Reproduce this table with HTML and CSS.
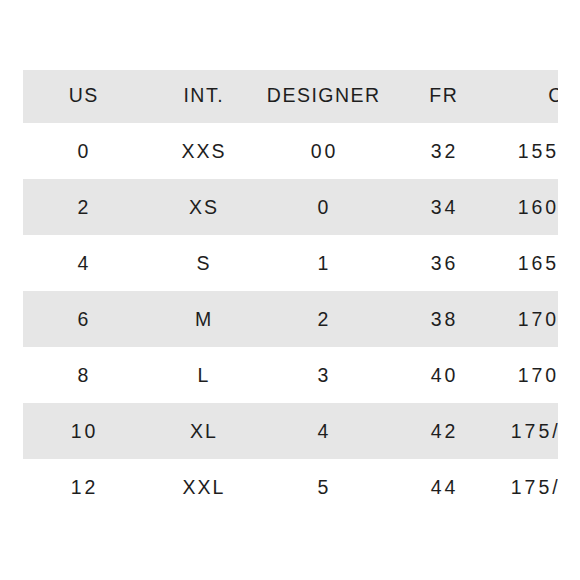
FILE: index.html
```html
<!DOCTYPE html>
<html lang="en">
<head>
<meta charset="utf-8">
<title>Size chart</title>
<link rel="stylesheet" href="styles.css">
</head>
<body>
<div class="page">
  <div class="chart">
    <table class="sizes">
      <colgroup>
        <col class="col"><col class="col"><col class="col"><col class="col"><col class="col">
      </colgroup>
      <thead>
        <tr><th>US</th><th>INT.</th><th>DESIGNER</th><th>FR</th><th>CN</th></tr>
      </thead>
      <tbody>
        <tr><td class="n">0</td><td>XXS</td><td class="n">00</td><td class="n">32</td><td class="n">155/80A</td></tr>
        <tr><td class="n">2</td><td>XS</td><td class="n">0</td><td class="n">34</td><td class="n">160/84A</td></tr>
        <tr><td class="n">4</td><td>S</td><td class="n">1</td><td class="n">36</td><td class="n">165/88A</td></tr>
        <tr><td class="n">6</td><td>M</td><td class="n">2</td><td class="n">38</td><td class="n">170/92A</td></tr>
        <tr><td class="n">8</td><td>L</td><td class="n">3</td><td class="n">40</td><td class="n">170/96A</td></tr>
        <tr><td class="n">10</td><td>XL</td><td class="n">4</td><td class="n">42</td><td class="n">175/100A</td></tr>
        <tr><td class="n">12</td><td>XXL</td><td class="n">5</td><td class="n">44</td><td class="n">175/104A</td></tr>
      </tbody>
    </table>
  </div>
</div>
</body>
</html>
```
FILE: styles.css
```css
html, body {
  margin: 0;
  padding: 0;
  background: #ffffff;
}

.page {
  padding: 70px 0 0 23px;
}

.chart {
  width: 535px;
  overflow: hidden;
}

.sizes {
  border-collapse: collapse;
  border-spacing: 0;
  table-layout: fixed;
  width: 600px;
  font-family: "Liberation Sans", Arial, Helvetica, sans-serif;
  font-size: 19.5px;
  color: #1e1e1e;
}

.sizes .col {
  width: 120px;
}

.sizes th,
.sizes td {
  box-sizing: border-box;
  padding: 0;
  text-align: center;
  vertical-align: middle;
  font-weight: normal;
  white-space: nowrap;
}

.sizes thead tr {
  height: 53px;
  background: #e6e6e6;
}

.sizes th {
  letter-spacing: 1.5px;
  padding-left: 1.5px;
  padding-bottom: 3px;
}

.sizes tbody tr {
  height: 56px;
}

.sizes tbody tr:nth-child(even) {
  background: #e6e6e6;
}

.sizes td {
  letter-spacing: 2px;
  padding-left: 2px;
}

.sizes td.n {
  letter-spacing: 3px;
  padding-left: 3px;
}
```
